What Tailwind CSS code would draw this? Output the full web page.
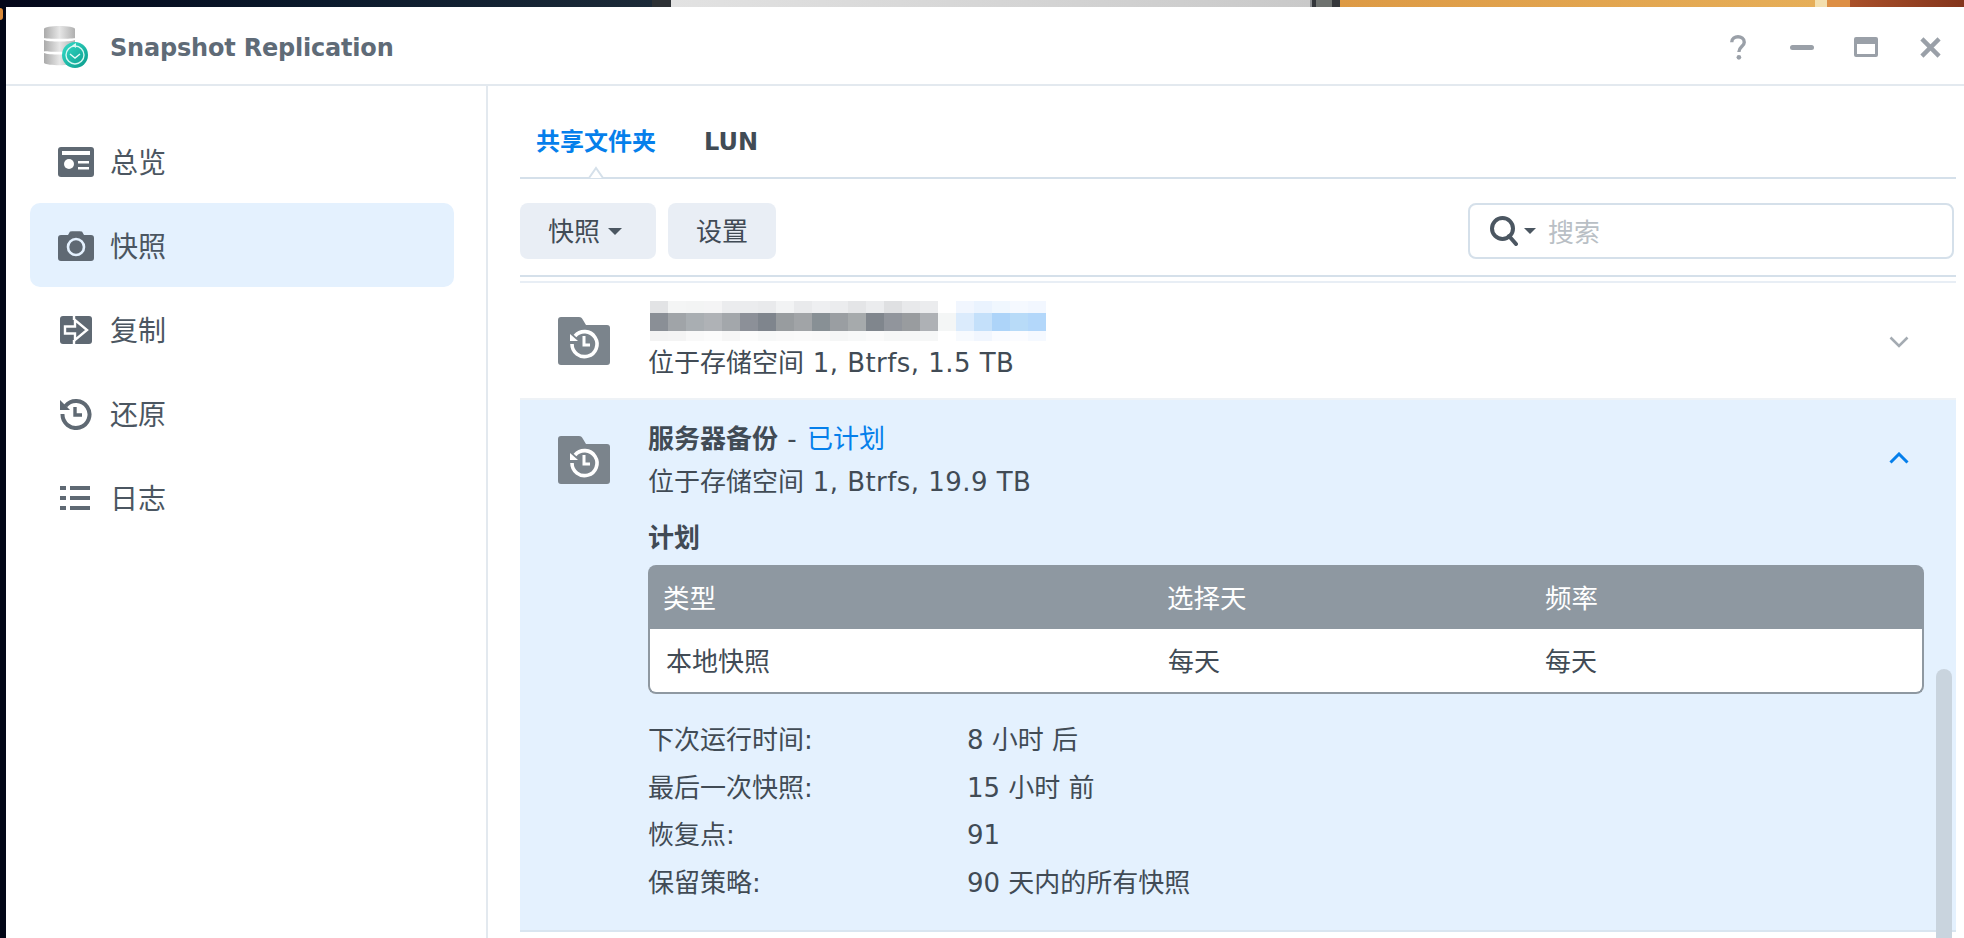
<!DOCTYPE html>
<html lang="zh-CN">
<head>
    <meta charset="UTF-8">
    <title>Snapshot Replication</title>
    <script src="https://cdn.jsdelivr.net/npm/@tailwindcss/browser@4"></script>
</head>
<body class="relative h-[938px] overflow-hidden bg-[#020617] font-['DejaVu_Sans','Noto_Sans_CJK_SC',sans-serif] text-[26px] text-[#414b55]">
    <!-- Wallpaper strip behind the window -->
    <div class="flex h-[7px]">
        <div class="w-[652px] bg-gradient-to-r from-[#04071a] via-[#0b1a2c] to-[#1c2a38]"></div>
        <div class="w-[19px] bg-[#2d3135]"></div>
        <div class="w-[639px] bg-gradient-to-r from-[#e2e2e2] to-[#c9c9c9]"></div>
        <div class="w-[2px] bg-[#8a8d90]"></div>
        <div class="w-[4px] bg-[#33363a]"></div>
        <div class="w-[16px] bg-[#6e726f]"></div>
        <div class="w-[8px] bg-[#35373a]"></div>
        <div class="w-[475px] bg-gradient-to-r from-[#dd9a45] to-[#e6ae58]"></div>
        <div class="w-[12px] bg-[#f3dfae]"></div>
        <div class="w-[23px] bg-[#dd8f45]"></div>
        <div class="flex-1 bg-gradient-to-r from-[#a9502a] to-[#84351c]"></div>
    </div>
    <div class="absolute left-0 top-[8px] w-[3px] h-[12px] rounded-r-full bg-[#d98a3a]"></div>

    <!-- Window -->
    <div class="ml-[6px] h-[931px] bg-white flex flex-col">
        <!-- Title bar -->
        <div class="h-[79px] shrink-0 border-b-2 border-[#e3e9ef] flex items-center pl-[38px]">
            <svg class="w-[44px] h-[44px] mt-[4px]" viewBox="0 0 44 44">
                <defs>
                    <linearGradient id="disk" x1="0" x2="1" y1="0" y2="0"><stop offset="0" stop-color="#aaa"/><stop offset=".5" stop-color="#e6e6e6"/><stop offset="1" stop-color="#b0b0b0"/></linearGradient>
                    <linearGradient id="clock" x1="0" x2="1" y1="0" y2="1"><stop offset="0" stop-color="#35dcc8"/><stop offset="1" stop-color="#0a9a8a"/></linearGradient>
                </defs>
                <path d="M0 3c0-4 31-4 31 0v9c0 1-31 1-31 0z" fill="url(#disk)"/>
                <path d="M0 14c4 2 27 2 31 0v11c0 1-31 1-31 0z" fill="url(#disk)"/>
                <path d="M0 27c4 2 27 2 31 0v10c-3 3-28 3-31 0z" fill="url(#disk)"/>
                <circle cx="31" cy="29" r="13" fill="url(#clock)"/>
                <circle cx="31" cy="29" r="9" fill="none" stroke="#d8f7f2" stroke-width="1.4"/>
                <path d="M26 28l5 4 5-4" fill="none" stroke="#e8fbf8" stroke-width="1.4"/>
                <path d="M32 17l-4 2.500 4 2.500z" fill="#d8f7f2"/>
            </svg>
            <span class="ml-[22px] mt-[4px] text-[24px] tracking-[-0.2px] font-bold text-[#5f6b77]">Snapshot Replication</span>
            <div class="ml-auto mt-[3px] flex items-center">
                <svg class="w-[18px] h-[25px] mr-[43px]" viewBox="0 0 20 28"><path d="M3 8c0-8 14-8 14 0 0 5-6 5-6 11" fill="none" stroke="#9aa0a8" stroke-width="3.800"/><circle cx="11" cy="25" r="2.600" fill="#9aa0a8"/></svg>
                <div class="w-[24px] h-[5px] rounded-full bg-[#9aa0a8] mr-[40px]"></div>
                <div class="w-[24px] h-[20px] rounded-[2px] border-[3px] border-t-[7px] border-[#9aa0a8] mr-[42px]"></div>
                <svg class="w-[21px] h-[21px] mr-[23px]" viewBox="0 0 22 22"><path d="M2 2l18 18M20 2L2 20" stroke="#9aa0a8" stroke-width="4.600"/></svg>
            </div>
        </div>

        <div class="flex flex-1 min-h-0">
            <!-- Sidebar -->
            <nav class="w-[482px] shrink-0 border-r-2 border-[#e3e9ef] pl-[24px] pt-[33px] text-[28px] text-[#4b5661]">
                <a class="flex items-center h-[84px] w-[424px] pl-[28px] pt-[2px]">
                    <svg class="w-[36px] h-[30px]" viewBox="0 0 36 30"><rect width="36" height="30" rx="3" fill="#5f6973"/><rect x="4" y="4" width="28" height="4" fill="#fff"/><circle cx="11" cy="17" r="5" fill="#fff"/><rect x="20" y="14" width="11" height="2.500" fill="#fff"/><rect x="20" y="20" width="11" height="2.500" fill="#fff"/></svg>
                    <span class="ml-[16px] mt-[3px]">总览</span>
                </a>
                <a class="flex items-center h-[84px] w-[424px] pl-[28px] pt-[2px] rounded-[10px] bg-[#e4f1fe]">
                    <svg class="w-[36px] h-[30px]" viewBox="0 0 36 30"><path d="M3 4h7l2-3.500c.5-.5 11-.5 12 0l2 3.500h7c2 0 3 1 3 3v20c0 2-1 3-3 3H3c-2 0-3-1-3-3V7c0-2 1-3 3-3z" fill="#5f6973"/><circle cx="18" cy="16" r="8" fill="#5f6973" stroke="#e4f1fe" stroke-width="2.600"/></svg>
                    <span class="ml-[16px] mt-[3px]">快照</span>
                </a>
                <a class="flex items-center h-[84px] w-[424px] pl-[30px] pt-[2px]">
                    <svg class="w-[32px] h-[28px]" viewBox="0 0 32 28"><rect width="32" height="28" rx="3" fill="#5f6973"/><path d="M5 10.500h10V4l12 10-12 10v-6.500H5z" fill="#5f6973" stroke="#fff" stroke-width="2.400"/><path d="M14 0v4M14 24v4" stroke="#fff" stroke-width="2.400"/></svg>
                    <span class="ml-[18px] mt-[3px]">复制</span>
                </a>
                <a class="flex items-center h-[84px] w-[424px] pl-[30px] pt-[2px]">
                    <svg class="w-[32px] h-[32px]" viewBox="0 0 32 32"><path d="M5.500 8A13.500 13.500 0 1 1 2.500 16" fill="none" stroke="#5f6973" stroke-width="4"/><path d="M0 2l10 10H0z" fill="#5f6973"/><path d="M15 9v8h7" fill="none" stroke="#5f6973" stroke-width="3.400"/></svg>
                    <span class="ml-[18px] mt-[3px]">还原</span>
                </a>
                <a class="flex items-center h-[84px] w-[424px] pl-[30px] pt-[2px]">
                    <svg class="w-[30px] h-[24px]" viewBox="0 0 30 24"><path d="M0 0h6v4H0zM10 0h20v4H10zM0 10h6v4H0zM10 10h20v4H10zM0 20h6v4H0zM10 20h20v4H10z" fill="#5f6973"/></svg>
                    <span class="ml-[20px] mt-[3px]">日志</span>
                </a>
            </nav>

            <!-- Main -->
            <main class="flex-1 min-w-0 pl-[32px] pr-[8px] flex flex-col">
                <!-- Tabs -->
                <div class="relative h-[93px] shrink-0 border-b-2 border-[#d5e0ea] flex items-end pb-[17px] pl-[16px] text-[24px] font-bold">
                    <span class="text-[#057feb]">共享文件夹</span>
                    <span class="ml-[48px] text-[#414b55]">LUN</span>
                    <svg class="absolute left-[64px] bottom-[-2px] w-[24px] h-[14px]" viewBox="0 0 24 14"><path d="M0 13h5L12 3l7 10h5" fill="#fff" stroke="#d5e0ea" stroke-width="2"/></svg>
                </div>

                <!-- Toolbar -->
                <div class="h-[96px] shrink-0 flex pt-[24px]">
                    <button class="w-[136px] h-[56px] rounded-[8px] bg-[#e9eef5] flex items-center pl-[28px] gap-[8px]"><span class="mt-[2px]">快照</span><span class="w-0 h-0 border-x-[7px] border-x-transparent border-t-[7px] border-t-[#4b5661]"></span></button>
                    <button class="ml-[12px] w-[108px] h-[56px] rounded-[8px] bg-[#e9eef5] pt-[2px]">设置</button>
                    <div class="ml-auto mr-[2px] w-[486px] h-[56px] rounded-[8px] border-2 border-[#d5e0ea] flex items-center pl-[20px]">
                        <svg class="w-[28px] h-[30px]" viewBox="0 0 28 30"><circle cx="12.500" cy="12.500" r="10.500" fill="none" stroke="#4b5661" stroke-width="4"/><path d="M19 20l7 8" stroke="#4b5661" stroke-width="4" stroke-linecap="round"/></svg>
                        <span class="ml-[6px] w-0 h-0 border-x-[6px] border-x-transparent border-t-[6px] border-t-[#4b5661]"></span>
                        <span class="ml-[12px] mt-[4px] text-[#b9bfc5]">搜索</span>
                    </div>
                </div>

                <!-- Volume list -->
                <div class="relative flex-1 min-h-0 overflow-hidden border-t-2 border-[#d5e0ea]">
                    <div class="h-[4px]"></div>
                    <div class="h-[2px] bg-[#e8eef5]"></div>

                    <!-- Collapsed row -->
                    <div class="h-[117px] border-b-2 border-[#eef2f6] flex pl-[38px] pt-[34px]">
                        <svg class="w-[52px] h-[48px] shrink-0" viewBox="0 0 52 48"><use href="#folder"/></svg>
                        <div class="ml-[38px] mt-[-16px]">
                            <div class="ml-[2px] w-[396px] h-[40px] flex flex-col">
                                <div class="flex h-[12px]"><i class="w-[18px] bg-[#e2e3e5]"></i><i class="w-[18px] bg-[#f4f5f5]"></i><i class="w-[18px] bg-[#f3f4f4]"></i><i class="w-[18px] bg-[#f4f4f5]"></i><i class="w-[18px] bg-[#ebecee]"></i><i class="w-[18px] bg-[#ebecee]"></i><i class="w-[18px] bg-[#e9eaec]"></i><i class="w-[18px] bg-[#f2f3f4]"></i><i class="w-[18px] bg-[#e9eaec]"></i><i class="w-[18px] bg-[#eeeff1]"></i><i class="w-[18px] bg-[#ebecee]"></i><i class="w-[18px] bg-[#e4e5e7]"></i><i class="w-[18px] bg-[#ebecee]"></i><i class="w-[18px] bg-[#dfe0e2]"></i><i class="w-[18px] bg-[#e8e9eb]"></i><i class="w-[18px] bg-[#ebecee]"></i><i class="w-[18px] bg-white"></i><i class="w-[18px] bg-[#f1f6fe]"></i><i class="w-[18px] bg-[#eaf3fe]"></i><i class="w-[18px] bg-[#f0f7fe]"></i><i class="w-[18px] bg-[#f5f9ff]"></i><i class="w-[18px] bg-[#f2f7ff]"></i></div>
                                <div class="flex h-[18px]"><i class="w-[18px] bg-[#8a8f96]"></i><i class="w-[18px] bg-[#a0a4a8]"></i><i class="w-[18px] bg-[#a9aeb2]"></i><i class="w-[18px] bg-[#afb2b6]"></i><i class="w-[18px] bg-[#a3a7ab]"></i><i class="w-[18px] bg-[#8c9098]"></i><i class="w-[18px] bg-[#7f858d]"></i><i class="w-[18px] bg-[#989c9f]"></i><i class="w-[18px] bg-[#a1a4a7]"></i><i class="w-[18px] bg-[#889095]"></i><i class="w-[18px] bg-[#9a9ea2]"></i><i class="w-[18px] bg-[#a6aaac]"></i><i class="w-[18px] bg-[#80868d]"></i><i class="w-[18px] bg-[#91959c]"></i><i class="w-[18px] bg-[#999c9f]"></i><i class="w-[18px] bg-[#aeb1b5]"></i><i class="w-[18px] bg-[#f4f6f6]"></i><i class="w-[18px] bg-[#dbebfc]"></i><i class="w-[18px] bg-[#c4e0fa]"></i><i class="w-[18px] bg-[#add4f9]"></i><i class="w-[18px] bg-[#b8dbf8]"></i><i class="w-[18px] bg-[#b3d7fa]"></i></div>
                                <div class="flex h-[10px]"><i class="w-[18px] bg-[#f3f3f3]"></i><i class="w-[18px] bg-[#f4f4f4]"></i><i class="w-[18px] bg-[#f9f9f9]"></i><i class="w-[18px] bg-[#fbfbfb]"></i><i class="w-[18px] bg-[#f6f6f6]"></i><i class="w-[18px] bg-[#fbfbfb]"></i><i class="w-[18px] bg-[#f7f8f8]"></i><i class="w-[18px] bg-[#f9f9f9]"></i><i class="w-[18px] bg-[#fafafa]"></i><i class="w-[18px] bg-[#f9f9f9]"></i><i class="w-[18px] bg-[#f5f6f6]"></i><i class="w-[18px] bg-[#f7f8f8]"></i><i class="w-[18px] bg-[#fafafa]"></i><i class="w-[18px] bg-[#f6f7f7]"></i><i class="w-[18px] bg-[#f6f7f7]"></i><i class="w-[18px] bg-[#f6f7f7]"></i><i class="w-[18px] bg-white"></i><i class="w-[18px] bg-[#f7fafe]"></i><i class="w-[18px] bg-[#f1f6fe]"></i><i class="w-[18px] bg-[#f9fbff]"></i><i class="w-[18px] bg-[#fbfcff]"></i><i class="w-[18px] bg-[#f5f9ff]"></i></div>
                            </div>
                            <div class="leading-[44px]">位于存储空间<span class="tracking-[0.45px]"> 1, Btrfs, 1.5 TB</span></div>
                        </div>
                        <svg class="absolute right-[47px] top-[59px] w-[20px] h-[12px]" viewBox="0 0 20 12"><path d="M1.500 1.500L10 10l8.500-8.500" fill="none" stroke="#a4abb2" stroke-width="2.600"/></svg>
                    </div>

                    <!-- Expanded row -->
                    <div class="relative h-[532px] bg-[#e4f1fe] border-b-2 border-[#d9e5f0] flex pl-[38px] pt-[36px]">
                        <svg class="w-[52px] h-[48px] shrink-0" viewBox="0 0 52 48">
                            <g id="folder"><path d="M3 0h18c2 0 3 1 4 3l3 5h21a3 3 0 0 1 3 3v34a3 3 0 0 1-3 3H3a3 3 0 0 1-3-3V3a3 3 0 0 1 3-3z" fill="#7b848c"/><path d="M17 19a12.500 12.500 0 1 1-3 8" fill="none" stroke="#fff" stroke-width="3.600"/><path d="M12 17l8 7h-8z" fill="#fff"/><path d="M26 19v9h6" fill="none" stroke="#fff" stroke-width="3"/></g>
                        </svg>
                        <div class="ml-[38px] flex-1 mt-[-20px]">
                            <div class="leading-[44px] pt-[1px] h-[44px]"><b class="font-bold">服务器备份</b><span class="tracking-[1px]"> - </span><span class="text-[#057feb]">已计划</span></div>
                            <div class="leading-[44px]">位于存储空间<span class="tracking-[0.45px]"> 1, Btrfs, 19.9 TB</span></div>
                            <div class="leading-[44px] font-bold mt-[12px]">计划</div>
                            <table class="mt-[5px] w-[1276px] border-separate border-spacing-0 table-fixed">
                                <thead>
                                    <tr class="h-[64px] text-white text-left text-[26.500px]">
                                        <th class="w-[504px] pl-[15px] pt-[3px] font-normal bg-[#8e98a1] rounded-tl-[8px]">类型</th>
                                        <th class="w-[378px] pt-[3px] font-normal bg-[#8e98a1]"><span class="ml-[15px]">选择天</span></th>
                                        <th class="pt-[3px] font-normal bg-[#8e98a1] rounded-tr-[8px]"><span class="ml-[15px]">频率</span></th>
                                    </tr>
                                </thead>
                                <tbody>
                                    <tr class="h-[65px] bg-white">
                                        <td class="pl-[16px] pt-[3px] border-l-2 border-b-2 border-[#8e98a1] rounded-bl-[8px]">本地快照</td>
                                        <td class="pt-[3px] border-b-2 border-[#8e98a1]"><span class="ml-[16px]">每天</span></td>
                                        <td class="pt-[3px] border-r-2 border-b-2 border-[#8e98a1] rounded-br-[8px]"><span class="ml-[15px]">每天</span></td>
                                    </tr>
                                </tbody>
                            </table>
                            <div class="mt-[23px] grid grid-cols-[319px_1fr] auto-rows-[47.600px] items-center">
                                <span>下次运行时间:</span><span>8 小时 后</span>
                                <span>最后一次快照:</span><span>15 小时 前</span>
                                <span>恢复点:</span><span>91</span>
                                <span>保留策略:</span><span>90 天内的所有快照</span>
                            </div>
                        </div>
                        <svg class="absolute right-[47px] top-[52px] w-[20px] h-[12px]" viewBox="0 0 20 12"><path d="M1.500 10.500L10 2l8.500 8.500" fill="none" stroke="#057feb" stroke-width="3"/></svg>
                    </div>

                    <!-- Scrollbar thumb -->
                    <div class="absolute right-[4px] top-[392px] bottom-0 w-[16px] rounded-t-full bg-[#c9d4de]"></div>
                </div>
            </main>
        </div>
    </div>
</body>
</html>
